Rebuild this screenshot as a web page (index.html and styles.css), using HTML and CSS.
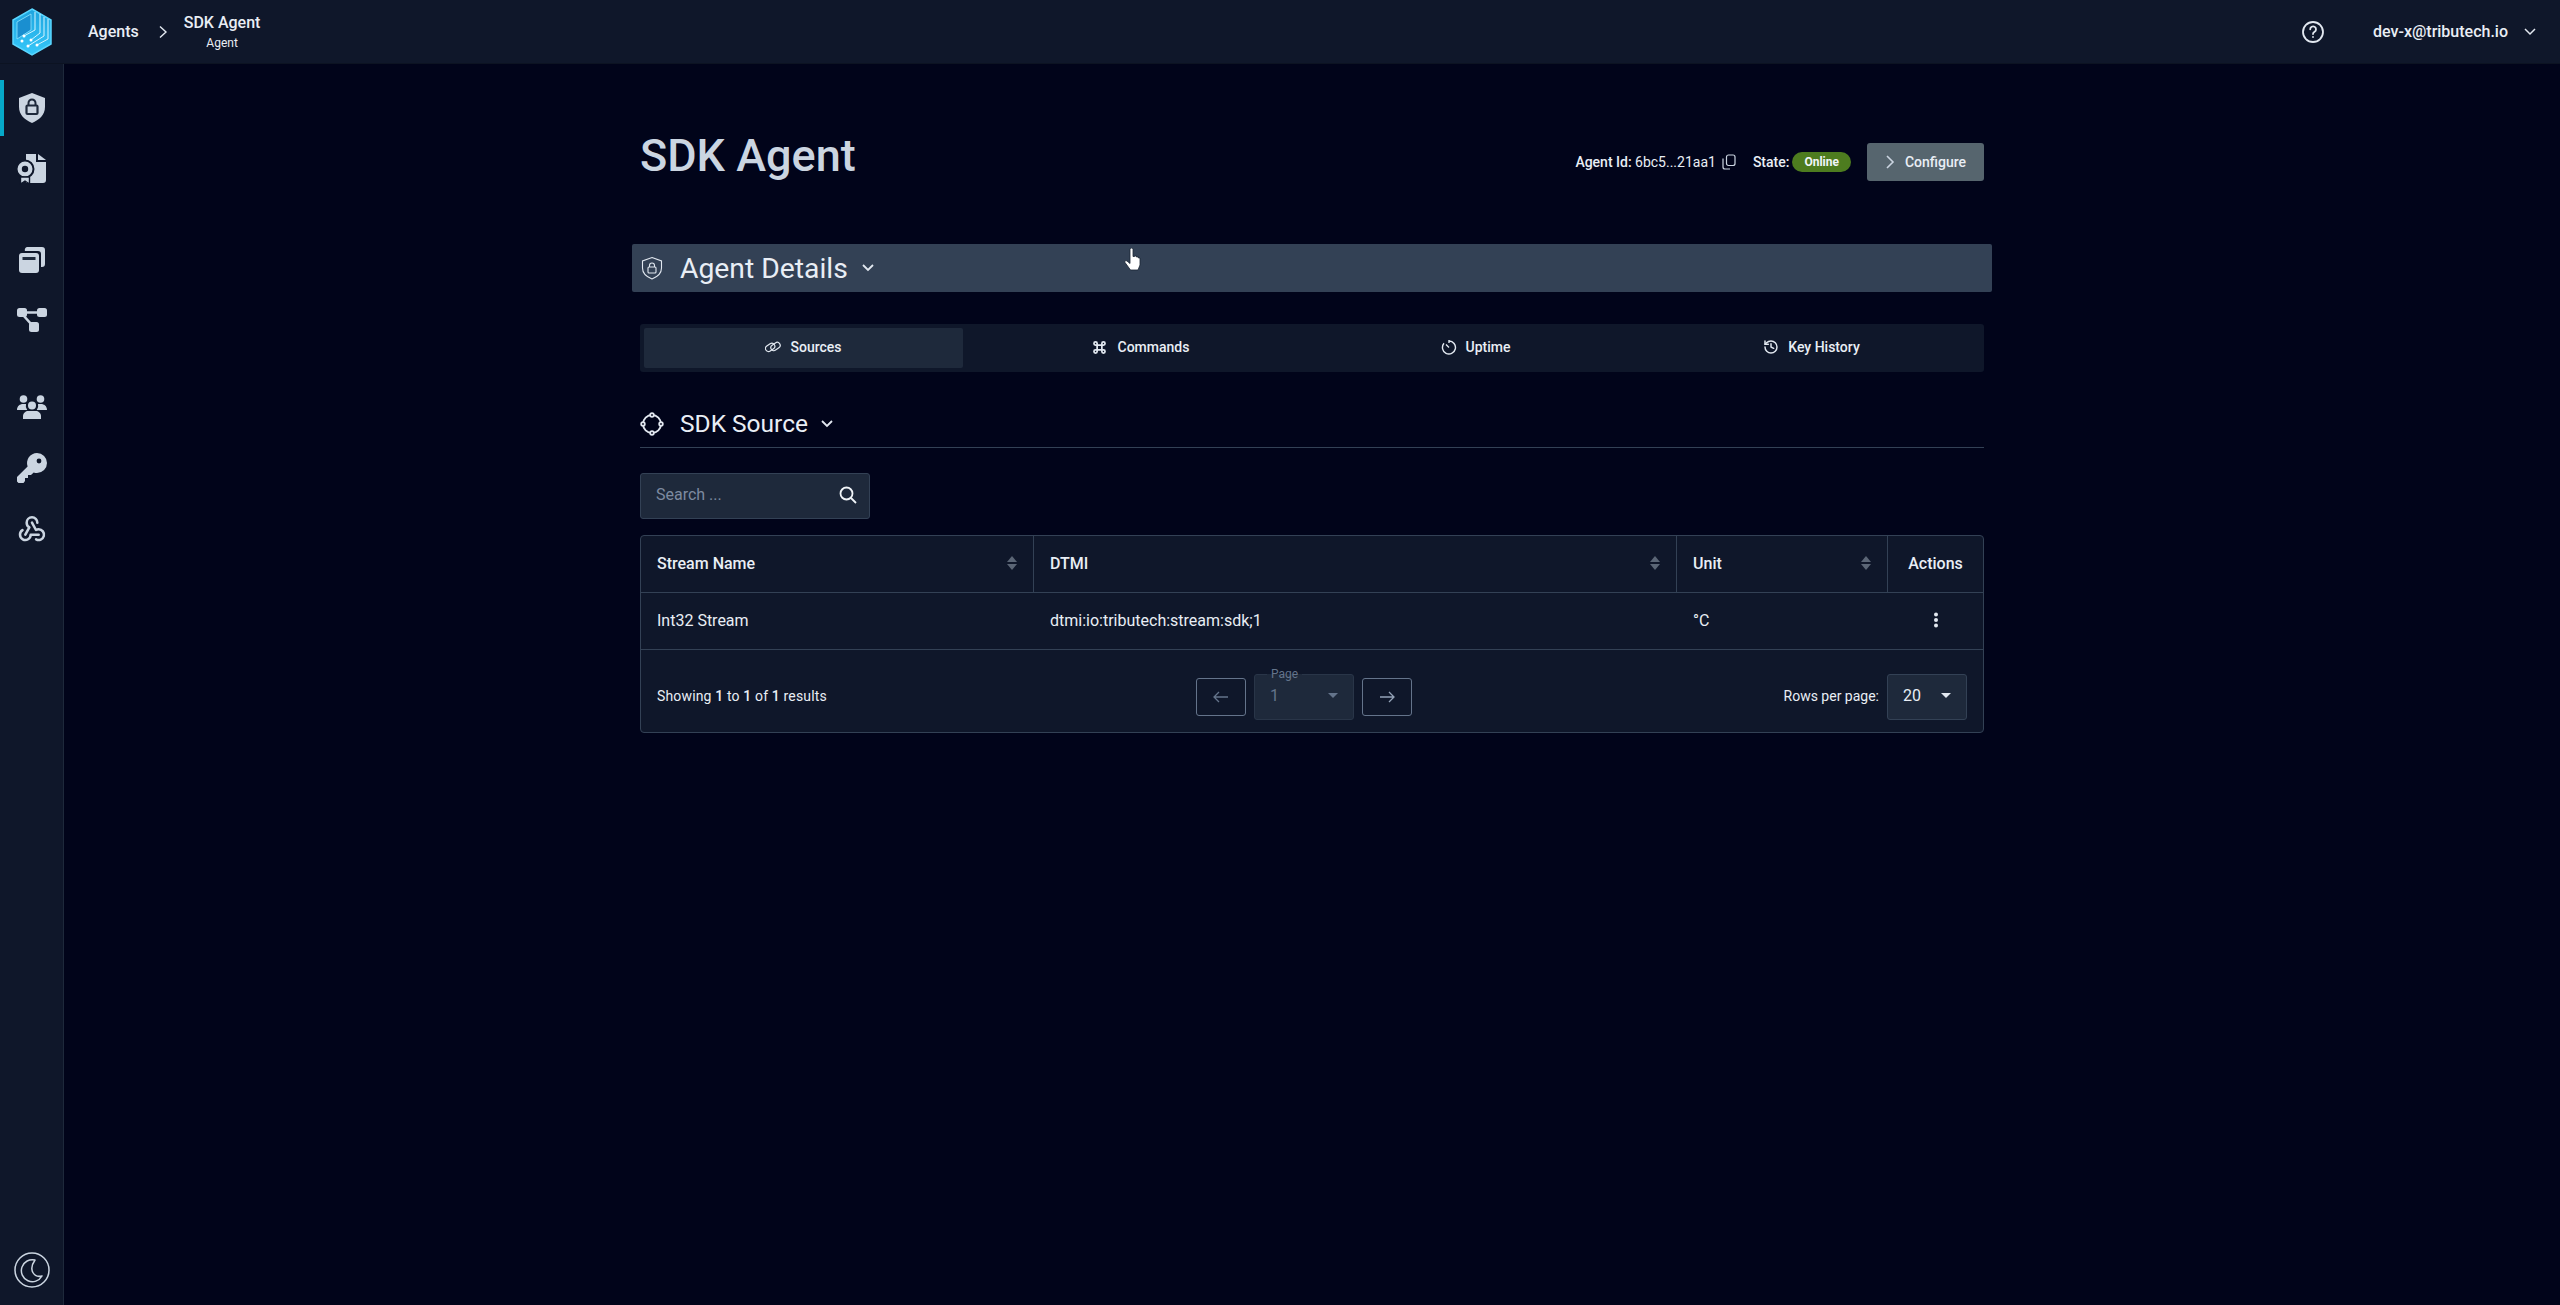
FILE: index.html
```html
<!DOCTYPE html>
<html lang="en">
<head>
    <meta charset="UTF-8">
    <title>SDK Agent</title>
    <link rel="stylesheet" href="styles.css">
</head>
<body>
    <header class="topbar">
        <div class="logo">
            <svg width="42" height="48" viewBox="0 0 42 48">
                <defs>
                    <linearGradient id="hexfill" x1="0" y1="0" x2="0" y2="1">
                        <stop offset="0" stop-color="#1ea4de"/>
                        <stop offset="1" stop-color="#36c8fa"/>
                    </linearGradient>
                </defs>
                <path d="M21 1 40 12V36L21 47 2 36V12Z" fill="url(#hexfill)" stroke="#5ad6ff" stroke-width="1.5"/>
                <path d="M20 6 6 14V31L20 22Z" fill="#1a8fd0" stroke="#8fe4ff" stroke-width="0.8"/>
                <path d="M24 4V22L13 28M29 6V25L20 32M33 9V28L17 38M37 11V31L26 37" fill="none" stroke="#d4f4ff" stroke-width="1"/>
                <circle cx="13" cy="28" r="1.5" fill="#fff"/>
                <circle cx="20" cy="32" r="1.5" fill="#fff"/>
                <circle cx="11" cy="33" r="1.5" fill="#fff"/>
                <circle cx="17" cy="38" r="1.5" fill="#fff"/>
                <circle cx="26" cy="37" r="1.5" fill="#fff"/>
            </svg>
        </div>
        <nav class="crumbs">
            <span class="crumb">Agents</span>
            <svg class="crumb-sep" width="10" height="14" viewBox="0 0 10 14"><path d="M2 1.5 8 7 2 12.5" fill="none" stroke="#e2e8f0" stroke-width="1.4"/></svg>
            <div class="crumb-current">
                <span class="crumb">SDK Agent</span>
                <small>Agent</small>
            </div>
        </nav>
        <div class="user">
            <svg class="help" width="24" height="24" viewBox="0 0 24 24" fill="none" stroke="#e2e8f0" stroke-width="1.8" stroke-linecap="round"><circle cx="12" cy="12" r="10"/><path d="M9.2 9.3a2.9 2.9 0 1 1 4.4 2.5c-1 .6-1.6 1.1-1.6 2.2"/><path d="M12 17v.1"/></svg>
            <span class="email">dev-x@tributech.io</span>
            <svg width="14" height="10" viewBox="0 0 14 10"><path d="M2 2 7 7 12 2" fill="none" stroke="#e2e8f0" stroke-width="1.5"/></svg>
        </div>
    </header>

    <div class="layout">
        <aside class="sidebar">
            <div class="side-group first">
                <a class="side-item active">
                    <svg width="30" height="32" viewBox="0 0 30 32"><path d="M15 1 28 6V15C28 23 22 28 15 31 8 28 2 23 2 15V6Z" fill="#cbd5e1"/><rect x="9.5" y="13.5" width="11" height="8.5" rx="1" fill="none" stroke="#1e293b" stroke-width="2.2"/><path d="M11.5 13.5V11a3.5 3.5 0 0 1 7 0v2.5" fill="none" stroke="#1e293b" stroke-width="2"/></svg>
                </a>
                <a class="side-item">
                    <svg width="32" height="32" viewBox="0 0 32 32"><path d="M10 1H20V9H30V27a3 3 0 0 1-3 3H10Z" fill="#cbd5e1"/><path d="M22 1 30 7H22Z" fill="#cbd5e1"/><circle cx="9" cy="16" r="8.5" fill="#cbd5e1" stroke="#0f172a" stroke-width="2"/><circle cx="9" cy="16" r="3.2" fill="#0f172a"/><path d="M4.5 24V31L9 28 13.5 31V24Z" fill="#cbd5e1" stroke="#0f172a" stroke-width="1.4"/></svg>
                </a>
            </div>
            <div class="side-group">
                <a class="side-item">
                    <svg width="28" height="28" viewBox="0 0 28 28"><path d="M9 1H24a3 3 0 0 1 3 3V18a3 3 0 0 1-3 3H23V8a3 3 0 0 0-3-3H7A3 3 0 0 1 9 1Z" fill="#cbd5e1"/><rect x="1" y="7" width="20" height="20" rx="3" fill="#cbd5e1"/><rect x="4.5" y="11" width="13" height="3" fill="#1e293b"/></svg>
                </a>
                <a class="side-item">
                    <svg class="icon-nudge" width="30" height="25" viewBox="0 0 30 25"><g fill="#cbd5e1"><rect x="0" y="1" width="10" height="9" rx="2.5"/><rect x="20" y="1" width="10" height="9" rx="2.5"/><rect x="12" y="15" width="10" height="10" rx="2.5"/></g><path d="M8 5.5H22M6 8 15 18" fill="none" stroke="#cbd5e1" stroke-width="2.6"/></svg>
                </a>
            </div>
            <div class="side-group">
                <a class="side-item">
                    <svg width="30" height="24" viewBox="0 0 30 24"><g fill="#cbd5e1"><circle cx="6.5" cy="4" r="3.8"/><circle cx="23.5" cy="4" r="3.8"/><circle cx="15" cy="10.5" r="4"/><path d="M0 15c0-4 3-6 6-6h3a7 7 0 0 0 1.2 6Z"/><path d="M30 15c0-4-3-6-6-6h-3a7 7 0 0 1-1.2 6Z"/><path d="M6 24V21c0-3 3-5 5-5h8c2 0 5 2 5 5v3Z"/></g></svg>
                </a>
                <a class="side-item">
                    <svg width="30" height="30" viewBox="0 0 30 30"><path d="M20 0a10 10 0 0 1 0 20c-1.200 0-2.300-.2-3.300-.6L14 22H11V25H8V28L6.500 30H1.500L0 28.500V24L10.600 13.400A10 10 0 0 1 20 0Z" fill="#cbd5e1"/><circle cx="22" cy="8" r="2.400" fill="#0f172a"/></svg>
                </a>
                <a class="side-item">
                    <svg class="icon-nudge" width="32" height="32" viewBox="0 0 24 24" fill="none" stroke="#cbd5e1" stroke-width="1.9" stroke-linecap="round" stroke-linejoin="round"><path d="M4.876 13.61a4 4 0 1 0 6.124 3.39h6"/><path d="M15.066 20.502a4 4 0 1 0 1.934 -7.502c-.706 0 -1.424 .179 -2 .5l-3 -5.500"/><path d="M16 8a4 4 0 1 0 -8 0c0 1.506 .77 2.818 2 3.500l-3 5.500"/></svg>
                </a>
            </div>
            <div class="side-foot">
                <svg width="36" height="36" viewBox="0 0 36 36" fill="none" stroke="#cbd5e1" stroke-width="1.500"><circle cx="18" cy="18" r="17"/><path d="M21 8A11 11 0 1 0 28 24C20 26 14 18 21 8Z" stroke-linejoin="round"/></svg>
            </div>
        </aside>

        <main class="main">
            <div class="content">
                <div class="page-head">
                    <h1>SDK Agent</h1>
                    <div class="meta">
                        <span><b>Agent Id:</b> 6bc5...21aa1</span>
                        <svg class="copy" width="14" height="16" viewBox="0 0 14 16" fill="none" stroke="#cbd5e1" stroke-width="1.200"><rect x="4.500" y="1" width="8.500" height="10.500" rx="2"/><path d="M1 4.500V13a2 2 0 0 0 2 2H8"/></svg>
                        <span class="state"><b>State:</b></span>
                        <span class="badge">Online</span>
                        <button class="btn-configure">
                            <svg width="10" height="14" viewBox="0 0 10 14"><path d="M2 1 8 7 2 13" fill="none" stroke="#cbd5e1" stroke-width="1.600"/></svg>
                            Configure
                        </button>
                    </div>
                </div>

                <div class="details-bar">
                    <svg width="22" height="24" viewBox="0 0 22 24" fill="none" stroke="#e2e8f0" stroke-width="1.100"><path d="M11 1.500 20.500 5V12C20.500 17.500 16 21 11 23 6 21 1.500 17.500 1.500 12V5Z"/><rect x="7" y="11" width="8" height="6" rx="1"/><path d="M8.500 11V9.500a2.500 2.500 0 0 1 5 0V11"/></svg>
                    <span class="details-title">Agent Details</span>
                    <svg width="14" height="10" viewBox="0 0 14 10"><path d="M2 2 7 7 12 2" fill="none" stroke="#e2e8f0" stroke-width="1.800"/></svg>
                </div>

                <div class="tabs">
                    <a class="tab active">
                        <svg width="16" height="14" viewBox="0 0 16 14" fill="none" stroke="#e2e8f0" stroke-width="1.200"><rect x="0.200" y="4.500" width="10" height="6" rx="3" transform="rotate(-35 5 7.500)"/><rect x="5.500" y="3.500" width="10" height="6" rx="3" transform="rotate(-35 10.500 6.500)"/></svg>
                        Sources
                    </a>
                    <a class="tab">
                        <svg width="19" height="19" viewBox="0 0 24 24" fill="none" stroke="#e2e8f0" stroke-width="2.200"><path d="M7 9a2 2 0 1 1 2 -2v10a2 2 0 1 1 -2 -2h10a2 2 0 1 1 -2 2v-10a2 2 0 1 1 2 2h-10"/></svg>
                        Commands
                    </a>
                    <a class="tab">
                        <svg width="16" height="16" viewBox="0 0 16 16" fill="none" stroke="#e2e8f0" stroke-width="1.400"><path d="M8 2a6.500 6.500 0 1 1-5 2.300"/><path d="M8 1v3M5 5.500 8 8.500"/></svg>
                        Uptime
                    </a>
                    <a class="tab">
                        <svg width="16" height="16" viewBox="0 0 24 24" fill="none" stroke="#e2e8f0" stroke-width="2.200" stroke-linecap="round" stroke-linejoin="round"><path d="M3 12a9 9 0 1 0 9-9 9.750 9.750 0 0 0-6.740 2.740L3 8"/><path d="M3 3v5h5"/><path d="M12 7v5l4 2"/></svg>
                        Key History
                    </a>
                </div>

                <div class="section-head">
                    <svg width="24" height="24" viewBox="0 0 24 24" fill="none" stroke="#e2e8f0" stroke-width="1.800"><circle cx="12" cy="12" r="9"/><g fill="#01041a"><circle cx="12" cy="3" r="1.800"/><circle cx="12" cy="21" r="1.800"/><circle cx="3" cy="12" r="1.800"/><circle cx="21" cy="12" r="1.800"/></g></svg>
                    <span class="section-title">SDK Source</span>
                    <svg width="14" height="10" viewBox="0 0 14 10"><path d="M2 2 7 7 12 2" fill="none" stroke="#e2e8f0" stroke-width="1.800"/></svg>
                </div>

                <div class="search">
                    <span>Search ...</span>
                    <svg width="18" height="18" viewBox="0 0 18 18" fill="none" stroke="#f1f5f9" stroke-width="1.800"><circle cx="7.500" cy="7.500" r="6"/><path d="M12 12 17 17"/></svg>
                </div>

                <div class="table">
                    <div class="row head">
                        <div class="cell">Stream Name<i class="sort"></i></div>
                        <div class="cell">DTMI<i class="sort"></i></div>
                        <div class="cell">Unit<i class="sort"></i></div>
                        <div class="cell center">Actions</div>
                    </div>
                    <div class="row body">
                        <div class="cell">Int32 Stream</div>
                        <div class="cell">dtmi:io:tributech:stream:sdk;1</div>
                        <div class="cell">°C</div>
                        <div class="cell center">
                            <svg width="6" height="16" viewBox="0 0 6 16" fill="#e2e8f0"><circle cx="3" cy="2.500" r="2"/><circle cx="3" cy="8" r="2"/><circle cx="3" cy="13.500" r="2"/></svg>
                        </div>
                    </div>
                    <div class="table-foot">
                        <div class="showing">Showing <b>1</b> to <b>1</b> of <b>1</b> results</div>
                        <div class="pager">
                            <button class="page-btn">
                                <svg width="16" height="12" viewBox="0 0 16 12" fill="none" stroke="#64748b" stroke-width="1.300"><path d="M15 6H1M6 1 1 6 6 11"/></svg>
                            </button>
                            <div class="select disabled">
                                <span class="select-label">Page</span>
                                <span>1</span>
                                <i class="caret"></i>
                            </div>
                            <button class="page-btn">
                                <svg width="16" height="12" viewBox="0 0 16 12" fill="none" stroke="#94a3b8" stroke-width="1.300"><path d="M1 6H15M10 1 15 6 10 11"/></svg>
                            </button>
                        </div>
                        <div class="rows-per">
                            <span>Rows per page:</span>
                            <div class="select rows">
                                <span>20</span>
                                <i class="caret"></i>
                            </div>
                        </div>
                    </div>
                </div>
            </div>
        </main>
    </div>

    <svg class="cursor" width="18" height="23" viewBox="0 0 18 23"><path d="M6 1.500a1.500 1.500 0 0 1 3 0V8.500h1.500V8h2v1h2v1h1.500V17l-2 5H6.500L1 14.500c-.8-1.200.8-2.500 2-1.500l3 2.500Z" fill="#fff" stroke="#1b2433" stroke-width="0.800"/></svg>
</body>
</html>
```

FILE: styles.css
```css
*{
    box-sizing: border-box;
}
html,body{
    margin: 0;
    height: 100%;
}
body{
    background: #01041a;
    color: #e9eef5;
    font-family: Roboto, "Liberation Sans", sans-serif;
    font-size: 14px;
    display: flex;
    flex-direction: column;
    overflow: hidden;
}
b{
    font-weight: 500;
}
svg{
    display: block;
    flex: none;
}

/* top bar */
.topbar{
    height: 64px;
    flex: none;
    background: #0f172a;
    border-bottom: 1px solid #0c1322;
    display: flex;
    align-items: center;
}
.logo{
    width: 64px;
    display: flex;
    justify-content: center;
}
.crumbs{
    display: flex;
    align-items: center;
    margin-left: 24px;
}
.crumb{
    font-size: 16px;
    font-weight: 500;
}
.crumb-sep{
    margin: 0 16px 0 19px;
}
.crumb-current{
    display: flex;
    flex-direction: column;
    align-items: center;
    gap: 4px;
}
.crumb-current small{
    font-size: 12px;
}
.user{
    margin-left: auto;
    display: flex;
    align-items: center;
    padding-right: 23px;
}
.help{
    margin-right: 48px;
}
.email{
    font-size: 16px;
    font-weight: 500;
    margin-right: 15px;
}

/* sidebar */
.layout{
    flex: 1;
    display: flex;
    min-height: 0;
}
.sidebar{
    width: 64px;
    flex: none;
    background: #0f172a;
    border-right: 1px solid #1e293b;
    display: flex;
    flex-direction: column;
    padding-top: 16px;
}
.side-group{
    display: flex;
    flex-direction: column;
    gap: 5px;
    margin-bottom: 30px;
}
.side-group.first{
    margin-bottom: 35px;
}
.side-item{
    height: 56px;
    display: flex;
    align-items: center;
    justify-content: center;
    border-left: 4px solid transparent;
    padding-right: 4px;
}
.side-item.active{
    border-left-color: #06a9c9;
}
.icon-nudge{
    margin-top: -3px;
}
.side-foot{
    margin-top: auto;
    padding: 0 0 17px;
    display: flex;
    justify-content: center;
}

/* main */
.main{
    flex: 1;
    min-width: 0;
}
.content{
    width: 1344px;
    margin: 0 auto;
    padding-top: 62px;
}
.page-head{
    height: 56px;
    display: flex;
    align-items: flex-end;
    justify-content: space-between;
}
h1{
    margin: 0 0 -2px;
    font-size: 45px;
    line-height: 56px;
    font-weight: 500;
    color: #cbd5e1;
}
.meta{
    display: flex;
    align-items: center;
    margin-bottom: 1px;
}
.copy{
    margin-left: 6px;
}
.state{
    margin-left: 17px;
}
.badge{
    margin-left: 3px;
    height: 20px;
    line-height: 20px;
    padding: 0 12px;
    border-radius: 10px;
    background: #4d7c1f;
    color: #f1f5f9;
    font-size: 12px;
    font-weight: 700;
}
.btn-configure{
    margin-left: 16px;
    width: 117px;
    height: 38px;
    border: 0;
    border-radius: 3px;
    background: #56656e;
    color: #e9eef5;
    font: 500 14px Roboto, sans-serif;
    display: flex;
    align-items: center;
    justify-content: center;
    gap: 10px;
}
.details-bar{
    margin: 62px -8px 0;
    height: 48px;
    background: #334155;
    border-radius: 2px;
    display: flex;
    align-items: center;
    padding-left: 9px;
}
.details-title{
    font-size: 28.300px;
    margin: 0 13px 0 17px;
}
.tabs{
    margin-top: 32px;
    height: 48px;
    padding: 4px;
    background: #0f172a;
    border-radius: 3px;
    display: grid;
    grid-template-columns: repeat(4, 319px);
    gap: 17px;
}
.tab{
    display: flex;
    align-items: center;
    justify-content: center;
    gap: 9px;
    font-weight: 500;
    border-radius: 2px;
    padding-bottom: 2px;
}
.tab.active{
    background: #1e293b;
}
.section-head{
    margin-top: 28px;
    height: 48px;
    border-bottom: 1px solid #334155;
    display: flex;
    align-items: center;
}
.section-head svg:first-child{
    margin-right: 16px;
}
.section-title{
    font-size: 24.500px;
    margin-right: 12px;
}
.search{
    margin-top: 25px;
    width: 230px;
    height: 46px;
    background: #1e293b;
    border: 1px solid #334155;
    border-radius: 3px;
    display: flex;
    align-items: center;
    justify-content: space-between;
    padding: 0 12px 3px 15px;
    color: #7d8aa0;
    font-size: 16px;
}
.table{
    margin-top: 16px;
    background: #0f172a;
    border: 1px solid #334155;
    border-radius: 4px;
}
.row{
    height: 57px;
    display: grid;
    grid-template-columns: 393px 643px 211px 1fr;
    border-bottom: 1px solid #334155;
}
.cell{
    padding: 0 16px 2px;
    display: flex;
    align-items: center;
    justify-content: space-between;
    font-size: 16px;
}
.cell.center{
    justify-content: center;
    padding: 0 0 2px;
}
.head .cell{
    font-weight: 500;
    border-right: 1px solid #334155;
}
.head .cell:last-child{
    border-right: 0;
}
.sort{
    width: 10px;
    height: 14px;
    position: relative;
}
.sort::before,.sort::after{
    content: "";
    position: absolute;
    left: 0;
    border-left: 5px solid transparent;
    border-right: 5px solid transparent;
}
.sort::before{
    top: 0;
    border-bottom: 6px solid #5b6676;
}
.sort::after{
    bottom: 0;
    border-top: 6px solid #5b6676;
}
.table-foot{
    height: 82px;
    display: grid;
    grid-template-columns: 1fr auto 1fr;
    align-items: center;
    padding: 12px 16px 0;
}
.showing{
    letter-spacing: .15px;
    margin-bottom: 2px;
}
.pager{
    display: flex;
    align-items: center;
    gap: 8px;
    margin-right: 16px;
}
.page-btn{
    width: 50px;
    height: 38px;
    background: none;
    border: 1px solid #64748b;
    border-radius: 3px;
    display: flex;
    align-items: center;
    justify-content: center;
    padding: 0;
}
.select{
    position: relative;
    height: 46px;
    background: #1e293b;
    border: 1px solid #334155;
    border-radius: 3px;
    display: flex;
    align-items: center;
    justify-content: space-between;
    font-size: 16px;
    padding: 0 15px 3px;
}
.select.disabled{
    width: 100px;
    color: #64748b;
    border-color: #293548;
}
.select-label{
    position: absolute;
    top: -8px;
    left: 12px;
    padding: 0 4px;
    font-size: 12px;
    line-height: 14px;
    background: linear-gradient(#0f172a 50%, #1e293b 50%);
}
.caret{
    border-left: 5px solid transparent;
    border-right: 5px solid transparent;
    border-top: 5px solid #e2e8f0;
}
.disabled .caret{
    border-top-color: #64748b;
}
.rows-per{
    display: flex;
    align-items: center;
    justify-content: flex-end;
    gap: 8px;
}
.rows-per > span{
    margin-bottom: 2px;
}
.select.rows{
    width: 80px;
}
.cursor{
    position: absolute;
    left: 1124px;
    top: 248px;
}
```
